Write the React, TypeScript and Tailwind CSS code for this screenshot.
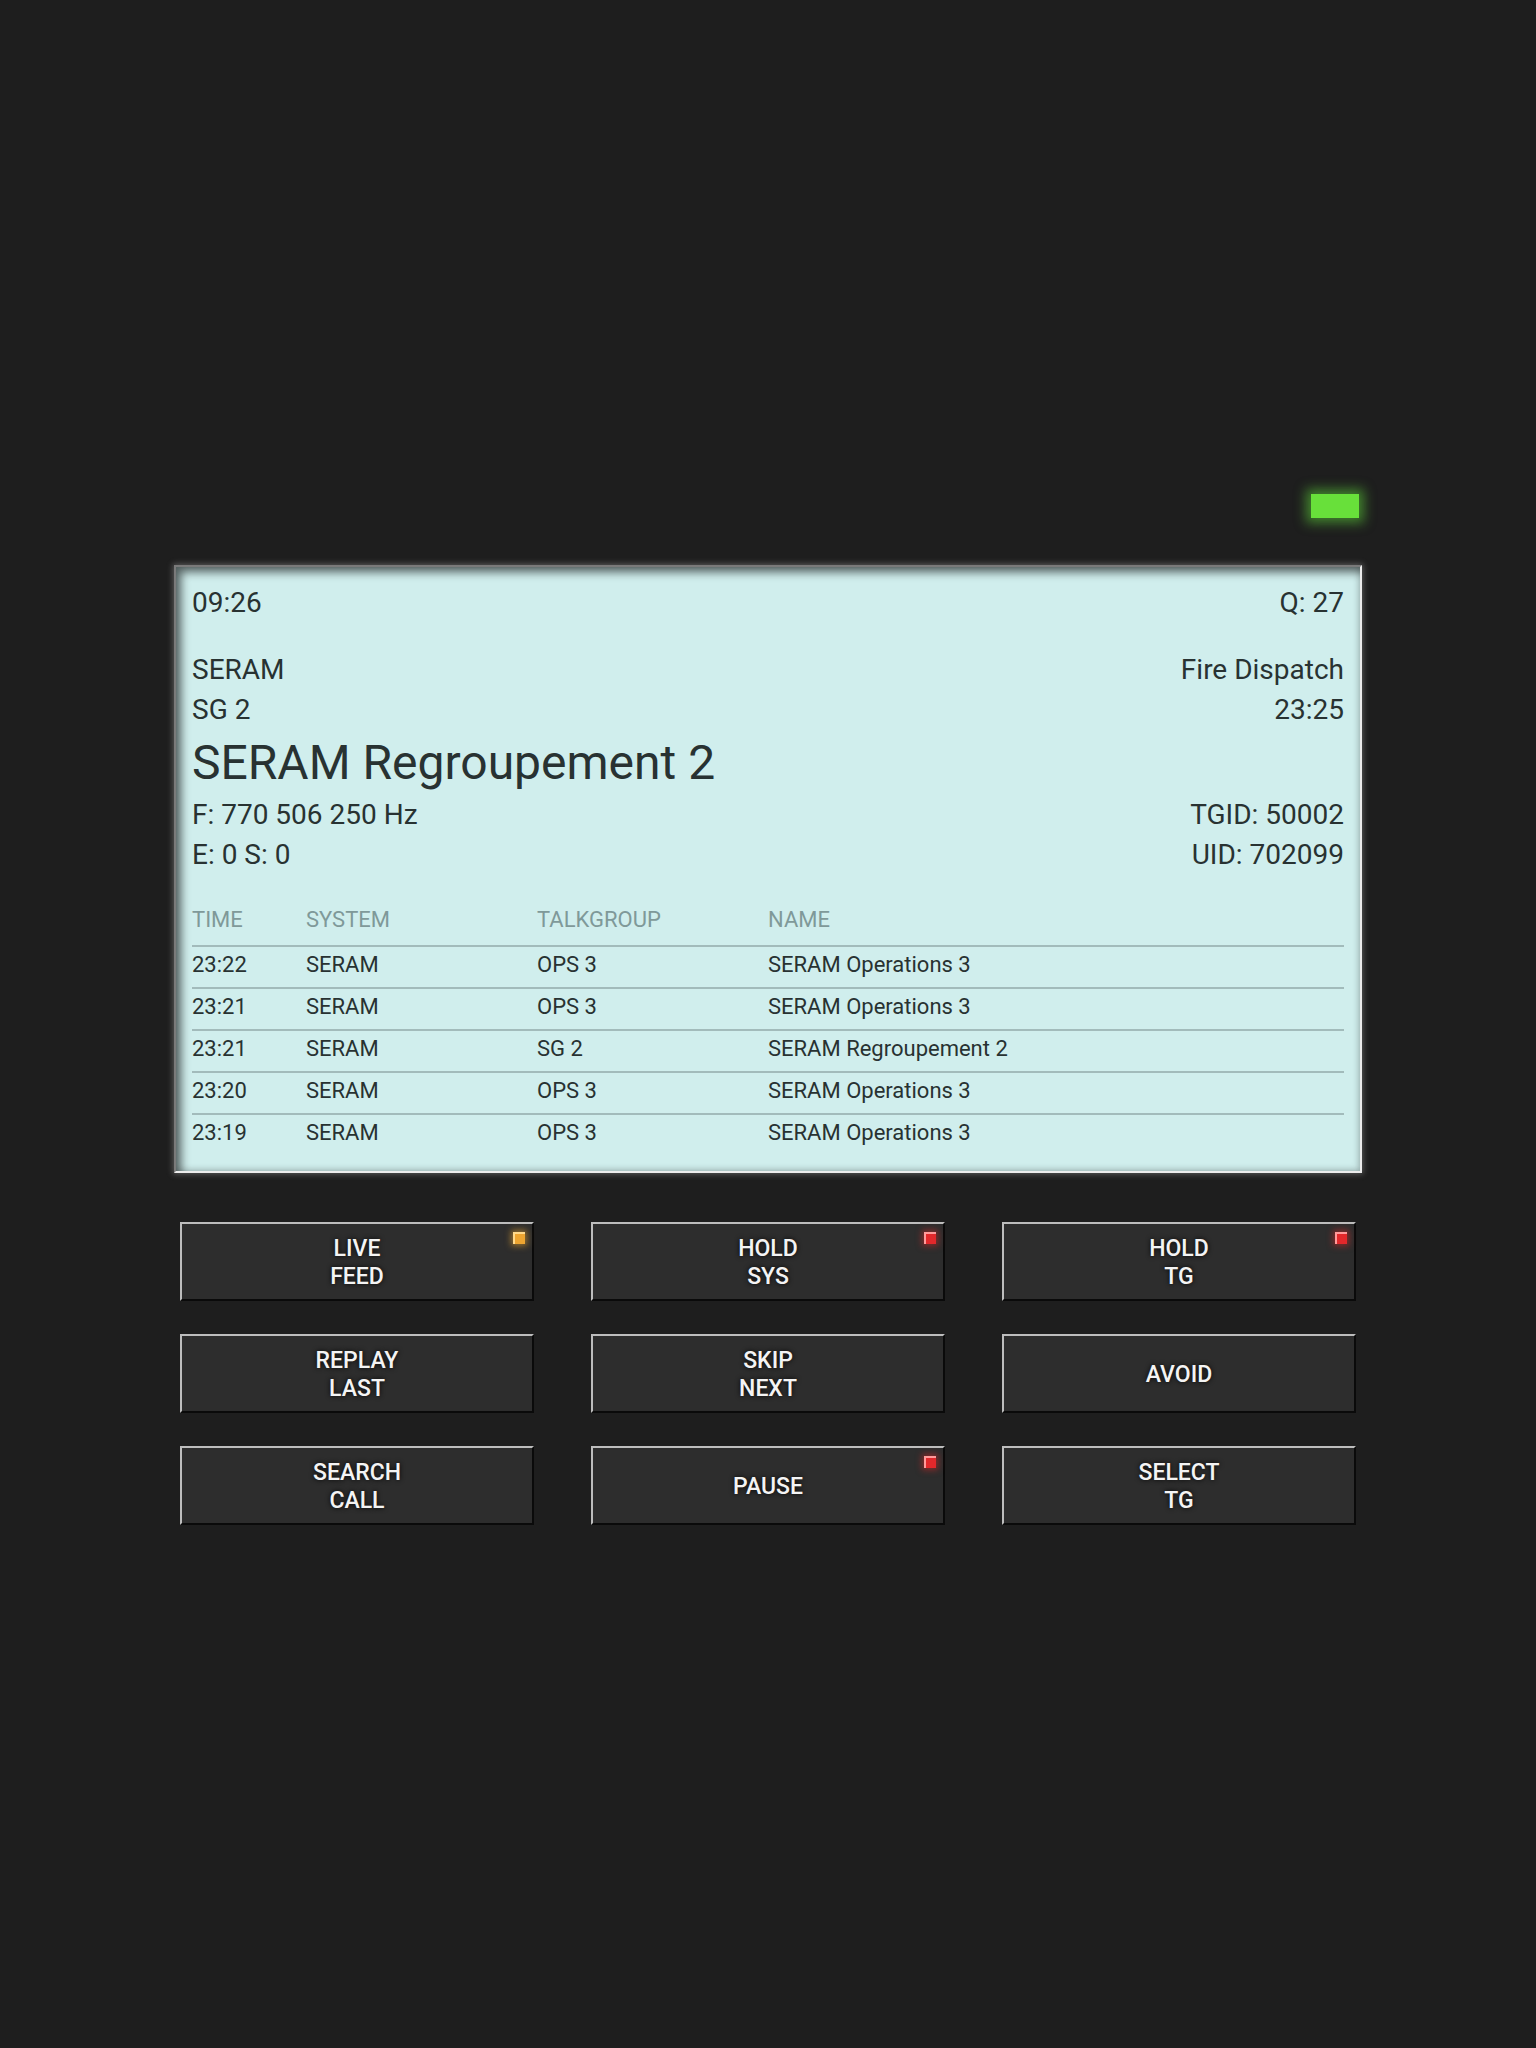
const HISTORY = [
  { time: "23:22", system: "SERAM", tg: "OPS 3", name: "SERAM Operations 3" },
  { time: "23:21", system: "SERAM", tg: "OPS 3", name: "SERAM Operations 3" },
  { time: "23:21", system: "SERAM", tg: "SG 2", name: "SERAM Regroupement 2" },
  { time: "23:20", system: "SERAM", tg: "OPS 3", name: "SERAM Operations 3" },
  { time: "23:19", system: "SERAM", tg: "OPS 3", name: "SERAM Operations 3" },
];

type Led = "orange" | "red" | null;

const BUTTONS: { lines: string[]; led: Led }[] = [
  { lines: ["LIVE", "FEED"], led: "orange" },
  { lines: ["HOLD", "SYS"], led: "red" },
  { lines: ["HOLD", "TG"], led: "red" },
  { lines: ["REPLAY", "LAST"], led: null },
  { lines: ["SKIP", "NEXT"], led: null },
  { lines: ["AVOID"], led: null },
  { lines: ["SEARCH", "CALL"], led: null },
  { lines: ["PAUSE"], led: "red" },
  { lines: ["SELECT", "TG"], led: null },
];

function Indicator({ color }: { color: "orange" | "red" }) {
  return color === "orange" ? (
    <span className="absolute top-[8px] right-[7px] w-[12px] h-[12px] bg-[#eda531] border-t-2 border-l-2 border-t-[#ffd98a] border-l-[#ffd98a] shadow-[0_0_6px_2px_rgba(240,170,50,0.55)]" />
  ) : (
    <span className="absolute top-[8px] right-[7px] w-[12px] h-[12px] bg-[#e2282b] border-t-2 border-l-2 border-t-[#ff9a9a] border-l-[#ff9a9a] shadow-[0_0_6px_2px_rgba(230,40,40,0.5)]" />
  );
}

export default function App() {
  return (
    <div className="min-h-[2048px] w-full bg-[#1e1e1e] font-['Roboto',sans-serif] pt-[494px]">
      {/* Status LED */}
      <div className="w-[1188px] mx-auto flex justify-end pr-[3px]">
        <div className="w-[48px] h-[24px] bg-[#68e03a] shadow-[0_0_12px_5px_rgba(100,230,60,0.5)]" />
      </div>

      {/* LCD display */}
      <div className="w-[1188px] mx-auto mt-[47px] bg-[#d0eeed] border-2 border-t-[#7a7a7a] border-l-[#7a7a7a] border-b-[#ececec] border-r-[#ececec] shadow-[0_0_6px_1px_rgba(170,170,170,0.45),inset_5px_5px_10px_rgba(0,0,0,0.6),inset_-2px_-2px_6px_rgba(0,0,0,0.15)] px-[16px] pt-[16px] pb-[16px] text-[#283232]">
        <div className="flex justify-between text-[28px] leading-[40px]">
          <span>09:26</span>
          <span>Q: 27</span>
        </div>

        <div className="mt-[27px] flex justify-between text-[28px] leading-[40px]">
          <div>
            <div>SERAM</div>
            <div>SG 2</div>
          </div>
          <div className="text-right">
            <div>Fire Dispatch</div>
            <div>23:25</div>
          </div>
        </div>

        <div className="text-[48px] leading-[65px]">SERAM Regroupement 2</div>

        <div className="flex justify-between text-[28px] leading-[40px]">
          <div>
            <div>F: 770 506 250 Hz</div>
            <div>E: 0 S: 0</div>
          </div>
          <div className="text-right">
            <div>TGID: 50002</div>
            <div>UID: 702099</div>
          </div>
        </div>

        {/* Call history */}
        <div className="mt-[27px] text-[22px]">
          <div className="grid grid-cols-[114px_231px_231px_1fr] leading-[36px] pb-[7px] text-[#7f9999]">
            <span>TIME</span>
            <span>SYSTEM</span>
            <span>TALKGROUP</span>
            <span>NAME</span>
          </div>
          {HISTORY.map((row, i) => (
            <div
              key={i}
              className="grid grid-cols-[114px_231px_231px_1fr] leading-[36px] pb-[4px] border-t-2 border-[#a2bbbb]"
            >
              <span>{row.time}</span>
              <span>{row.system}</span>
              <span>{row.tg}</span>
              <span>{row.name}</span>
            </div>
          ))}
        </div>
      </div>

      {/* Control buttons */}
      <div className="w-[1176px] mx-auto mt-[49px] grid grid-cols-3 gap-x-[57px] gap-y-[33px]">
        {BUTTONS.map((b) => (
          <button
            key={b.lines.join(" ")}
            className="relative h-[79px] bg-[#2d2d2d] border-2 border-t-[#bdbdbd] border-l-[#bdbdbd] border-b-[#0a0a0a] border-r-[#0a0a0a] flex flex-col items-center justify-center pt-[2px] text-[#f4f4f4] text-[23px] leading-[28px] font-medium [text-shadow:0_0_5px_rgba(0,0,0,0.95)]"
          >
            {b.lines.map((l) => (
              <span key={l}>{l}</span>
            ))}
            {b.led && <Indicator color={b.led} />}
          </button>
        ))}
      </div>
    </div>
  );
}
